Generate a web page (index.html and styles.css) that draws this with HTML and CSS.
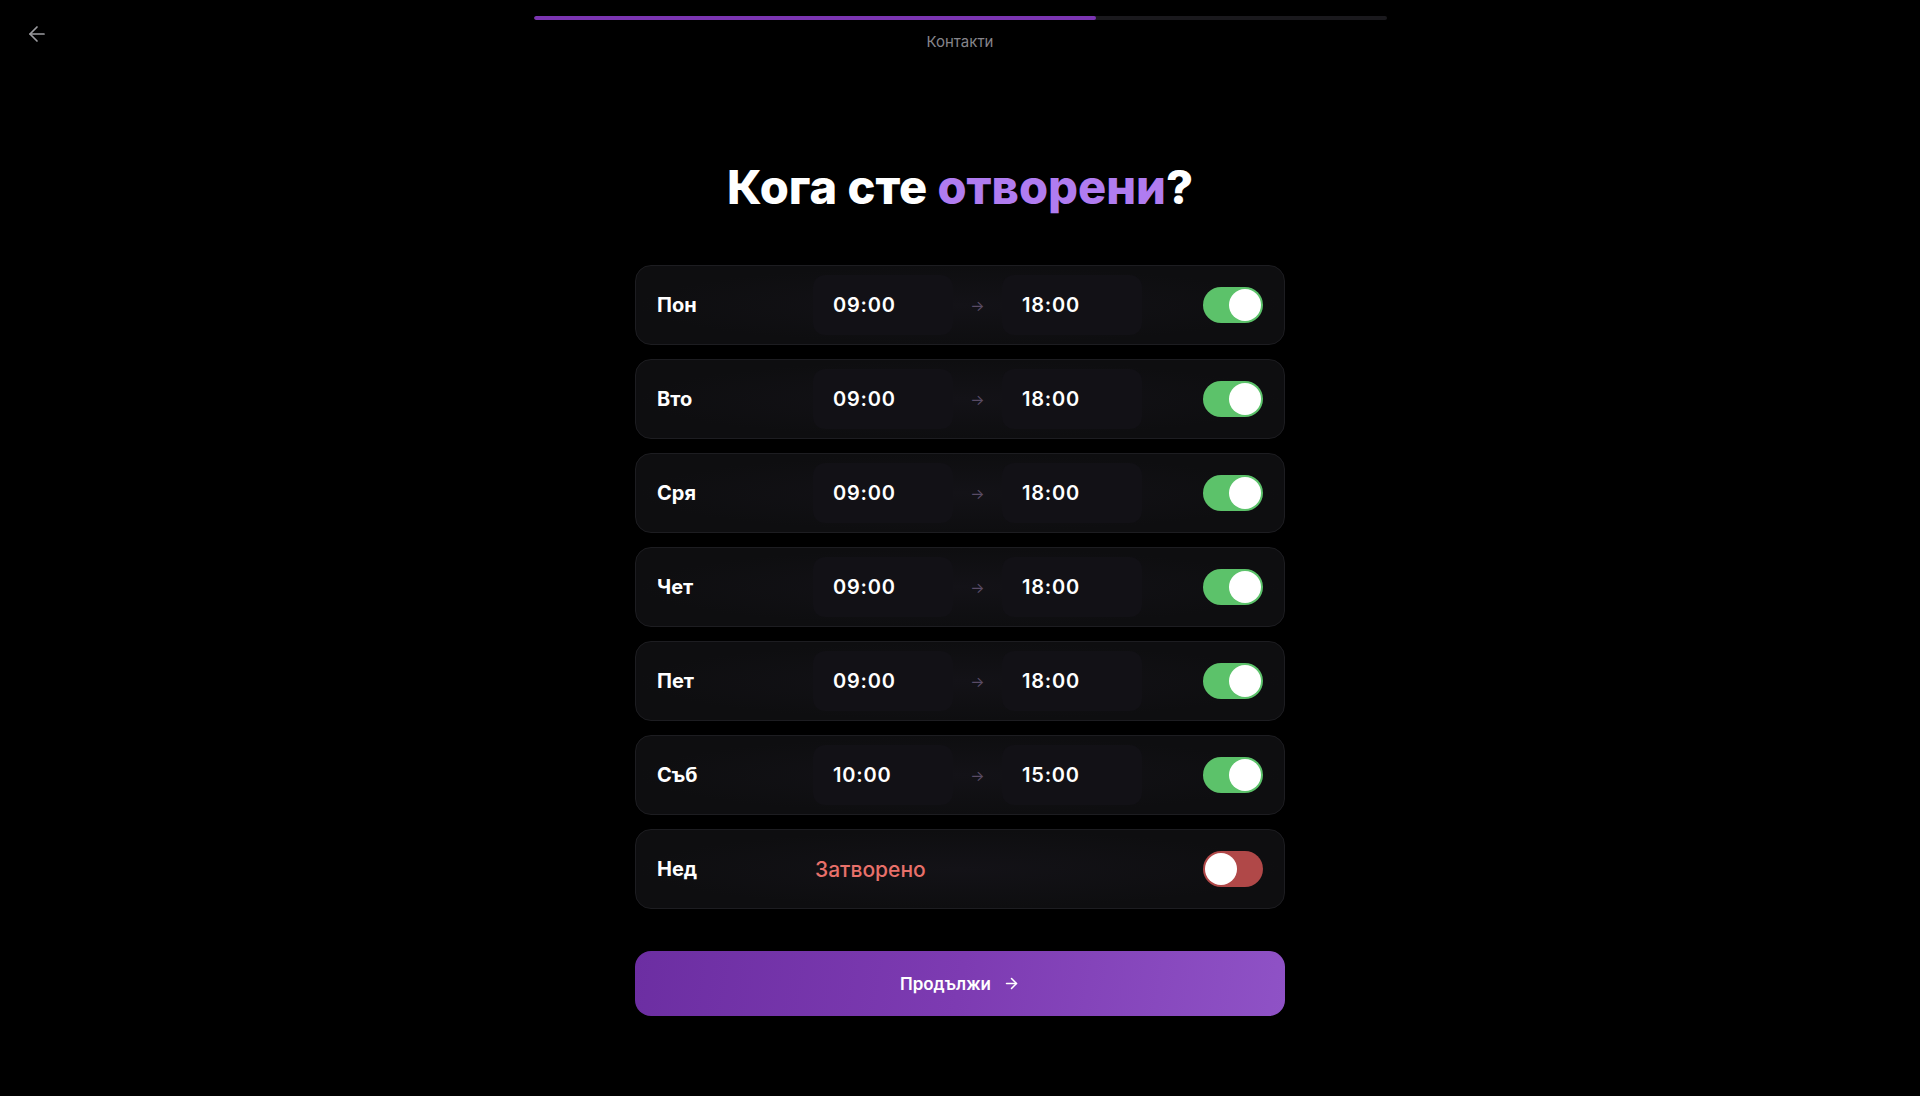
FILE: index.html
```html
<!doctype html>
<html lang="bg">
  <head>
    <meta charset="utf-8" />
    <meta name="viewport" content="width=device-width, initial-scale=1" />
    <title>Работно време</title>
    <link rel="stylesheet" href="styles.css">
  </head>

  <body>
    <header class="topbar">
      <div class="topbar-left">
        <button class="back-btn" type="button" aria-label="Назад">
          <svg width="24" height="24" viewBox="0 0 24 24" fill="none" stroke="currentColor" stroke-width="1.7" stroke-linecap="round" stroke-linejoin="round">
            <path d="M19 12H5" />
            <path d="M12 19l-7-7 7-7" />
          </svg>
        </button>
      </div>
      <div class="progress">
        <div class="progress-track">
          <div class="progress-fill" style="width: 66%"></div>
        </div>
        <span class="progress-label">Контакти</span>
      </div>
      <div></div>
    </header>

    <main class="content">
      <h1 class="title">Кога сте <span class="accent">отворени</span>?</h1>

      <div class="days">
        <div class="day-row">
          <span class="day-name">Пон</span>
          <div class="times">
            <div class="time-box">09:00</div>
            <span class="time-arrow">&rarr;</span>
            <div class="time-box">18:00</div>
          </div>
          <span class="toggle on"><span class="knob"></span></span>
        </div>

        <div class="day-row">
          <span class="day-name">Вто</span>
          <div class="times">
            <div class="time-box">09:00</div>
            <span class="time-arrow">&rarr;</span>
            <div class="time-box">18:00</div>
          </div>
          <span class="toggle on"><span class="knob"></span></span>
        </div>

        <div class="day-row">
          <span class="day-name">Сря</span>
          <div class="times">
            <div class="time-box">09:00</div>
            <span class="time-arrow">&rarr;</span>
            <div class="time-box">18:00</div>
          </div>
          <span class="toggle on"><span class="knob"></span></span>
        </div>

        <div class="day-row">
          <span class="day-name">Чет</span>
          <div class="times">
            <div class="time-box">09:00</div>
            <span class="time-arrow">&rarr;</span>
            <div class="time-box">18:00</div>
          </div>
          <span class="toggle on"><span class="knob"></span></span>
        </div>

        <div class="day-row">
          <span class="day-name">Пет</span>
          <div class="times">
            <div class="time-box">09:00</div>
            <span class="time-arrow">&rarr;</span>
            <div class="time-box">18:00</div>
          </div>
          <span class="toggle on"><span class="knob"></span></span>
        </div>

        <div class="day-row">
          <span class="day-name">Съб</span>
          <div class="times">
            <div class="time-box">10:00</div>
            <span class="time-arrow">&rarr;</span>
            <div class="time-box">15:00</div>
          </div>
          <span class="toggle on"><span class="knob"></span></span>
        </div>

        <div class="day-row">
          <span class="day-name">Нед</span>
          <div class="times">
            <span class="closed">Затворено</span>
          </div>
          <span class="toggle off"><span class="knob"></span></span>
        </div>
      </div>

      <button class="continue-btn" type="button">
        Продължи
        <svg width="17" height="17" viewBox="0 0 24 24" fill="none" stroke="currentColor" stroke-width="2.2" stroke-linecap="round" stroke-linejoin="round">
          <path d="M5 12h14" />
          <path d="M12 5l7 7-7 7" />
        </svg>
      </button>
    </main>
  </body>
</html>
```

FILE: styles.css
```css
body {
  margin: 0;
  font-family: "Inter", "Noto Sans", sans-serif;
  background-color: #000;
  color: #fff;
  min-height: 100vh;
}

.topbar {
  display: grid;
  grid-template-columns: 1fr 853px 1fr;
  align-items: start;
}

.topbar-left {
  padding: 20px 0 0 23px;
}

.back-btn {
  background: none;
  border: none;
  padding: 2px;
  color: #9c9ca0;
  cursor: pointer;
  display: flex;
}

.progress {
  display: flex;
  flex-direction: column;
  align-items: center;
  padding-top: 16px;
}

.progress-track {
  width: 100%;
  height: 4px;
  border-radius: 2px;
  background-color: #1a191d;
  overflow: hidden;
}

.progress-fill {
  height: 100%;
  background-color: #7b35b2;
  border-radius: 2px;
}

.progress-label {
  margin-top: 13px;
  font-size: 15px;
  line-height: 18px;
  color: #86858b;
}

.content {
  display: flex;
  flex-direction: column;
  align-items: center;
}

.title {
  margin: 107px 0 0;
  font-size: 47px;
  font-weight: 800;
  letter-spacing: 0;
  line-height: 58px;
}

.accent {
  color: #b07cf0;
}

.days {
  width: 650px;
  margin-top: 49px;
  display: flex;
  flex-direction: column;
  gap: 14px;
}

.day-row {
  height: 80px;
  box-sizing: border-box;
  display: flex;
  align-items: center;
  padding: 0 21px;
  background: radial-gradient(ellipse at 50% 50%, #131217 0%, #0e0e10 70%);
  border: 1px solid #1d1d21;
  border-radius: 16px;
}

.day-name {
  width: 156px;
  font-size: 20px;
  font-weight: 700;
}

.times {
  flex: 1;
  display: flex;
  align-items: center;
}

.time-box {
  width: 140px;
  height: 60px;
  box-sizing: border-box;
  padding-left: 20px;
  display: flex;
  align-items: center;
  background-color: #121116;
  border-radius: 12px;
  font-size: 20px;
  font-weight: 600;
  letter-spacing: 0.04em;
}

.time-arrow {
  width: 49px;
  text-align: center;
  color: #5a4c66;
  font-size: 15px;
}

.closed {
  padding-left: 2px;
  font-size: 21px;
  font-weight: 500;
  color: #e8706a;
}

.toggle {
  width: 60px;
  height: 36px;
  box-sizing: border-box;
  border-radius: 18px;
  padding: 2px;
  display: flex;
}

.toggle.on {
  background-color: #5cc26a;
  justify-content: flex-end;
}

.toggle.off {
  background-color: #b04848;
  justify-content: flex-start;
}

.knob {
  width: 32px;
  height: 32px;
  border-radius: 50%;
  background-color: #fff;
}

.continue-btn {
  width: 650px;
  height: 65px;
  margin-top: 42px;
  display: flex;
  align-items: center;
  justify-content: center;
  gap: 12px;
  border: none;
  border-radius: 16px;
  background: linear-gradient(100deg, #6c2ea2 0%, #7d3bb2 50%, #8f52c6 100%);
  color: #fff;
  font-family: inherit;
  font-size: 17px;
  font-weight: 600;
  cursor: pointer;
}
```
